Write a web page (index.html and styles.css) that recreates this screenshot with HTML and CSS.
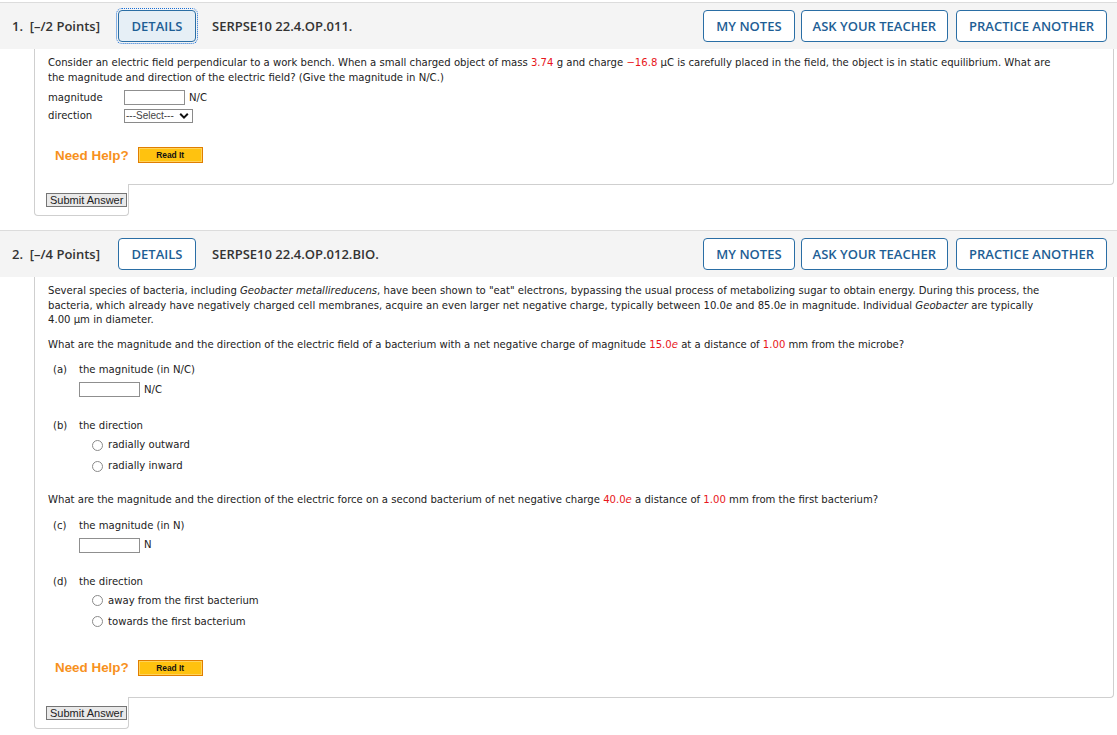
FILE: index.html
```html
<!DOCTYPE html>
<html>
<head>
<meta charset="utf-8">
<link rel="stylesheet" href="styles.css">
</head>
<body>
<div class="page">

  <section class="question first">
    <div class="q-header">
      <span class="q-num">1.&nbsp; [–/2 Points]</span>
      <button class="btn details focused">DETAILS</button>
      <span class="q-code">SERPSE10 22.4.OP.011.</span>
      <div class="spacer"></div>
      <button class="btn">MY NOTES</button>
      <button class="btn ask">ASK YOUR TEACHER</button>
      <button class="btn wide-gap">PRACTICE ANOTHER</button>
    </div>
    <div class="q-body">
      <p class="text">Consider an electric field perpendicular to a work bench. When a small charged object of mass <span class="red">3.74</span> g and charge <span class="red">−16.8</span> μC is carefully placed in the field, the object is in static equilibrium. What are the magnitude and direction of the electric field? (Give the magnitude in N/C.)</p>
      <div class="answer-grid">
        <span class="lbl">magnitude</span>
        <span class="field"><span class="input"></span><span class="unit">N/C</span></span>
        <span class="lbl">direction</span>
        <span class="field"><span class="select">---Select---<svg class="chev" width="10" height="8" viewBox="0 0 10 8"><path d="M1.2 1.8 L5 5.6 L8.8 1.8" fill="none" stroke="#111" stroke-width="2"/></svg></span></span>
      </div>
      <div class="help">
        <span class="need">Need Help?</span>
        <span class="readit">Read It</span>
      </div>
    </div>
    <div class="q-submit"><span class="submit">Submit Answer</span></div>
  </section>

  <section class="question">
    <div class="q-header">
      <span class="q-num">2.&nbsp; [–/4 Points]</span>
      <button class="btn details">DETAILS</button>
      <span class="q-code">SERPSE10 22.4.OP.012.BIO.</span>
      <div class="spacer"></div>
      <button class="btn">MY NOTES</button>
      <button class="btn ask">ASK YOUR TEACHER</button>
      <button class="btn wide-gap">PRACTICE ANOTHER</button>
    </div>
    <div class="q-body">
      <p class="text">Several species of bacteria, including <i>Geobacter metallireducens</i>, have been shown to "eat" electrons, bypassing the usual process of metabolizing sugar to obtain energy. During this process, the bacteria, which already have negatively charged cell membranes, acquire an even larger net negative charge, typically between 10.0<i>e</i> and 85.0<i>e</i> in magnitude. Individual <i>Geobacter</i> are typically 4.00 μm in diameter.</p>
      <p class="text para">What are the magnitude and the direction of the electric field of a bacterium with a net negative charge of magnitude <span class="red">15.0<i>e</i></span> at a distance of <span class="red">1.00</span> mm from the microbe?</p>
      <div class="part">
        <div class="part-title"><span class="plabel">(a)</span>the magnitude (in N/C)</div>
        <div class="part-field"><span class="input"></span><span class="unit">N/C</span></div>
      </div>
      <div class="part spaced">
        <div class="part-title"><span class="plabel">(b)</span>the direction</div>
        <div class="radios">
          <div class="radio"><span class="circle"></span>radially outward</div>
          <div class="radio"><span class="circle"></span>radially inward</div>
        </div>
      </div>
      <p class="text para2">What are the magnitude and the direction of the electric force on a second bacterium of net negative charge <span class="red">40.0<i>e</i></span> a distance of <span class="red">1.00</span> mm from the first bacterium?</p>
      <div class="part">
        <div class="part-title"><span class="plabel">(c)</span>the magnitude (in N)</div>
        <div class="part-field"><span class="input"></span><span class="unit">N</span></div>
      </div>
      <div class="part spaced">
        <div class="part-title"><span class="plabel">(d)</span>the direction</div>
        <div class="radios">
          <div class="radio"><span class="circle"></span>away from the first bacterium</div>
          <div class="radio"><span class="circle"></span>towards the first bacterium</div>
        </div>
      </div>
      <div class="help help2">
        <span class="need">Need Help?</span>
        <span class="readit">Read It</span>
      </div>
    </div>
    <div class="q-submit"><span class="submit">Submit Answer</span></div>
  </section>

</div>
</body>
</html>
```

FILE: styles.css
```css
* { box-sizing: border-box; }
html, body { margin: 0; padding: 0; background: #fff; }
body {
  font-family: "DejaVu Sans", Verdana, sans-serif;
  font-size: 10.1px;
  color: #222;
}
.page { width: 1117px; padding-top: 2px; }

.question { margin-bottom: 14px; }

.q-header {
  display: flex;
  align-items: center;
  height: 47px;
  border-top: 1px solid #dcdcdc;
  background: #f4f4f4;
  padding: 0 10px 1px 12px;
  font-family: "Open Sans", "Noto Sans", sans-serif;
  font-size: 13px;
  font-weight: 600;
  color: #333;
}
.q-num { width: 106px; }
.q-code { margin-left: 16px; color: #333; }
.spacer { flex: 1; }

.btn {
  font-family: "Open Sans", "Noto Sans", sans-serif;
  font-size: 13px;
  font-weight: 600;
  color: #1e5e95;
  background: #fff;
  border: 1px solid #2a6ea5;
  border-radius: 4px;
  height: 32px;
  padding: 0 12px;
  margin-left: 6px;
}
.btn.ask { padding: 0 11px; }
.btn.wide-gap { margin-left: 8px; }
.btn.details { width: 78px; margin-left: 0; padding: 0; }
.btn.focused {
  background: #e6eff6;
  outline: 1px dotted #1a6fd6;
  outline-offset: 1px;
}

.q-body {
  margin-left: 34px;
  margin-right: 3px;
  border: 1px solid #cfcfcf;
  border-top: none;
  border-bottom-right-radius: 4px;
  padding: 7px 57px 21px 13px;
}
.text { margin: 0; line-height: 14.5px; }
.red { color: #e8161b; }

.answer-grid {
  display: grid;
  grid-template-columns: 76px auto;
  row-gap: 4px;
  align-items: center;
  margin-top: 5px;
  line-height: 14px;
}
.field { display: flex; align-items: center; }
.input {
  display: inline-block;
  width: 61px;
  height: 15px;
  border: 1px solid #8f8f8f;
  background: #fff;
}
.unit { margin-left: 4px; }
.select {
  display: inline-flex;
  align-items: center;
  gap: 5px;
  height: 14px;
  border: 1px solid #8a8a8a;
  padding: 0 3px 0 1px;
  font-family: "Liberation Sans", Arial, sans-serif;
  font-size: 10px;
  color: #444;
}

.help {
  display: flex;
  align-items: center;
  margin: 24px 0 0 7px;
}
.need {
  font-family: "Liberation Sans", Arial, sans-serif;
  font-weight: bold;
  font-size: 13.4px;
  color: #f7911d;
}
.readit {
  margin-left: 9px;
  width: 65px;
  height: 16px;
  display: inline-flex;
  align-items: center;
  justify-content: center;
  background: #ffc20f;
  border: 1px solid #e07e00;
  box-shadow: inset 0 0 0 1px #ffd35a;
  font-family: "Liberation Sans", Arial, sans-serif;
  font-weight: bold;
  font-size: 8.4px;
  color: #111;
}

.q-submit {
  margin-left: 34px;
  margin-top: -1px;
  width: 95px;
  background: #fff;
  border: 1px solid #cfcfcf;
  border-top: none;
  border-radius: 0 0 4px 4px;
  padding: 9px 0 8px 11px;
  position: relative;
}
.submit {
  display: inline-block;
  height: 14px;
  line-height: 12px;
  padding: 0 3px;
  background: #e9e9e9;
  border: 1px solid #757575;
  font-family: "Liberation Sans", Arial, sans-serif;
  font-size: 11px;
  color: #222;
}

.para { margin-top: 10px; }
.para2 { margin-top: 20px; }
.part { margin-top: 11px; line-height: 14px; }
.part.spaced { margin-top: 22px; }
.part-title { display: flex; padding-left: 5px; }
.plabel { width: 26px; }
.part-field {
  display: flex;
  align-items: center;
  margin: 5px 0 0 31px;
}
.radios { margin: 5px 0 0 44px; }
.radio { display: flex; align-items: center; height: 14px; margin-bottom: 7px; }
.radio:last-child { margin-bottom: 0; }
.circle {
  width: 11px;
  height: 11px;
  border: 1px solid #8a8a8a;
  border-radius: 50%;
  margin-right: 5px;
  background: #fff;
}
.help2 { margin-top: 31px; }
```
